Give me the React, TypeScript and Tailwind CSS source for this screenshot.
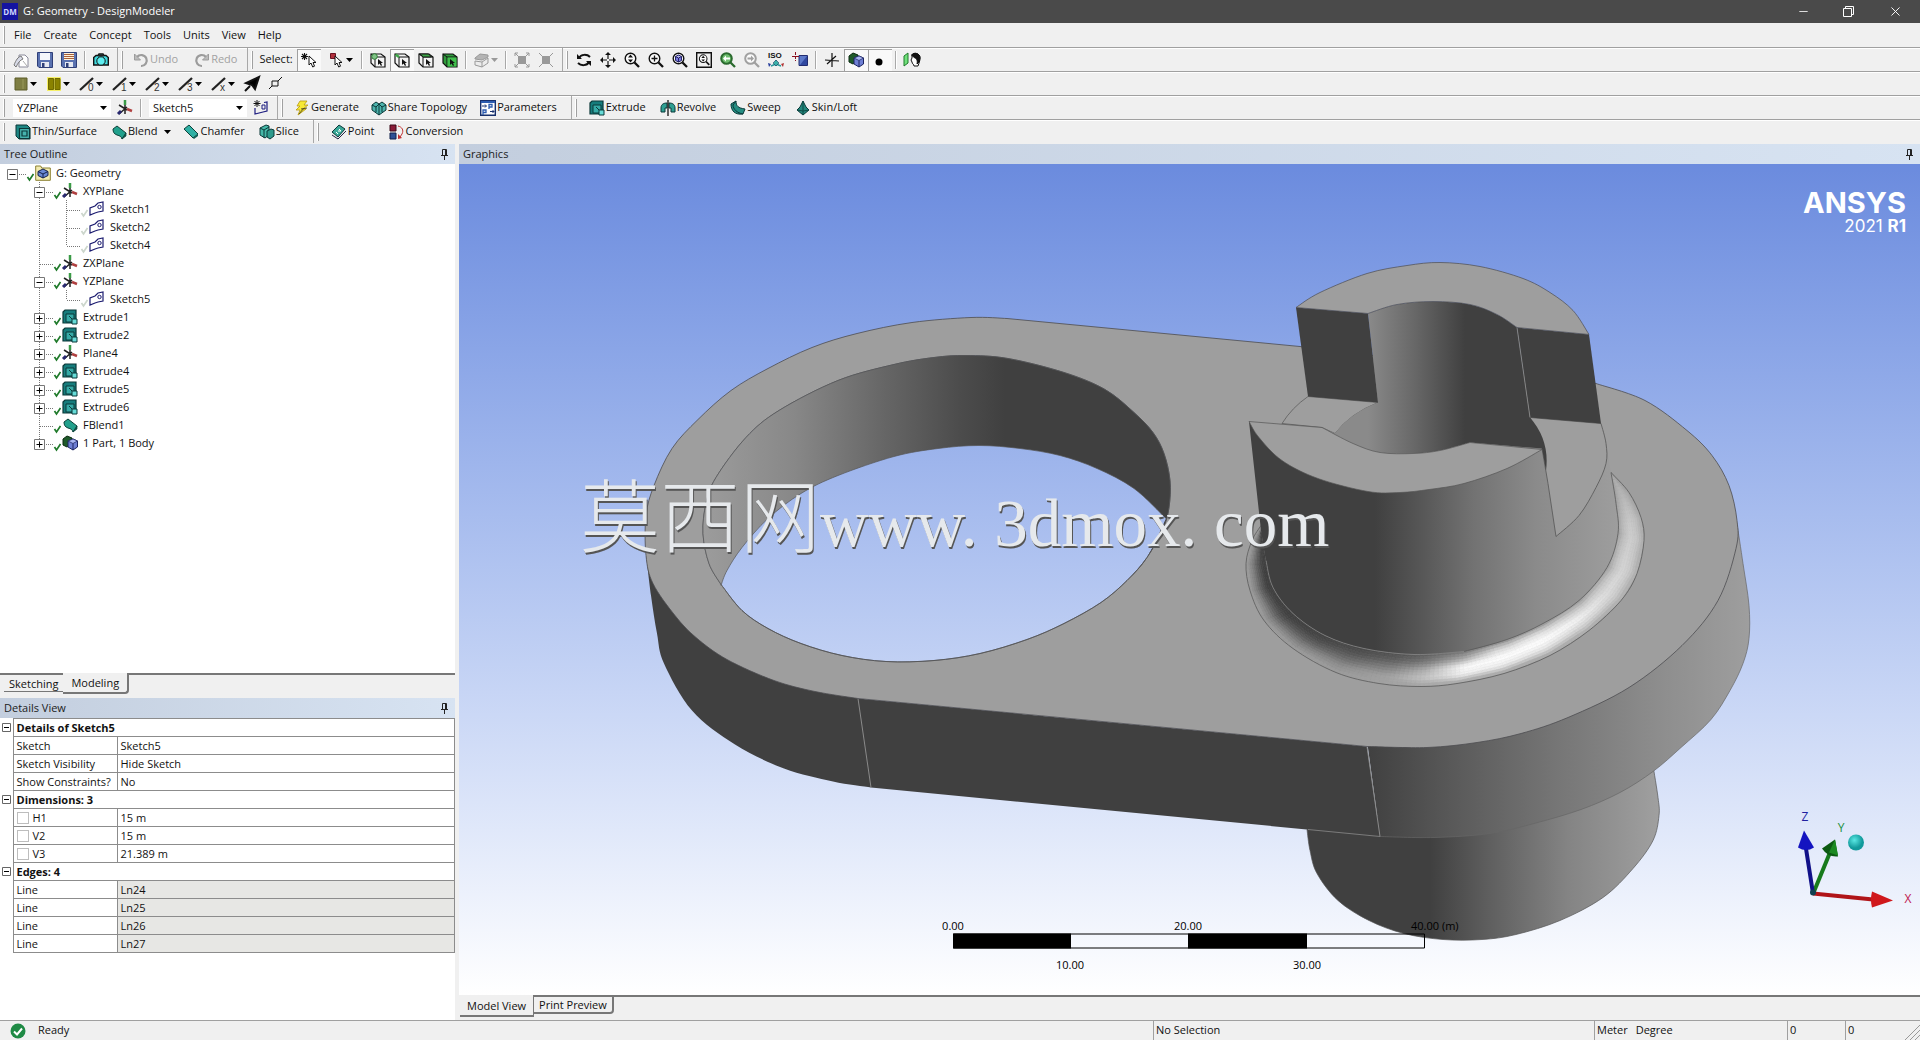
import type { ReactNode } from "react";
import { Minus, X } from "lucide-react";

/* ---------- small icons ---------- */

function Svg({ children, w = 16 }: { children: ReactNode; w?: number }) {
  return (
    <svg width={w} height="16" viewBox={`0 0 ${w} 16`} className="shrink-0 overflow-visible" fill="none" stroke="#111" aria-hidden="true">
      {children}
    </svg>
  );
}

const Caret = ({ color = "#000" }: { color?: string }) => (
  <svg width="7" height="4" viewBox="0 0 7 4" className="shrink-0" aria-hidden="true">
    <path d="M0 0h7L3.500 4z" fill={color} />
  </svg>
);

const NewIcon = () => (
  <Svg>
    <path d="M6 3h6l3 3v9H6z" fill="#fff" stroke="#8a8a9a" />
    <path d="M1 13c2-5 4-8 7-9l2 3c-3 1-5 4-7 8z" fill="#d8dbe8" stroke="#777" />
    <path d="M10 9l4 5" stroke="#aaa" />
  </Svg>
);

const SaveIcon = ({ lines = false }: { lines?: boolean }) => (
  <Svg>
    <path d="M.5 .5h15v15H2l-1.500-1.500z" fill="#5a72b0" stroke="#2f3f78" />
    <path d="M3 1h10v7H3z" fill={lines ? "#fff3dc" : "#f4f6fb"} stroke="none" />
    {lines && <path d="M3 2.500h10M3 4.500h10M3 6.500h10" stroke="#a8603a" />}
    <path d="M4 10h8v5H4z" fill="#e6e9f2" stroke="none" />
    <path d="M5 11h2.500v4H5z" fill="#2f3f78" stroke="none" />
  </Svg>
);

const CameraIcon = () => (
  <Svg>
    <path d="M.7 5.500L3 3.500h2L6 2h4l1 1.500h2l2.300 2V13H.7z" fill="#40d8dc" strokeWidth="1.400" />
    <path d="M5 2.500h6v2H5z" fill="#222" stroke="none" />
    <circle cx="8" cy="9" r="4.200" fill="#5eeef0" />
  </Svg>
);

const UndoIcon = ({ flip = false }: { flip?: boolean }) => (
  <Svg>
    <g stroke="#9c9c9c" strokeWidth="2.200" transform={flip ? "matrix(-1 0 0 1 16 0)" : undefined}>
      <path d="M4 5a5.500 5.500 0 1 1 4 9" />
      <path d="M1.500 2v6h6z" fill="#bbb" strokeWidth="1" />
    </g>
  </Svg>
);

const Pointer = ({ x = 0, y = 0, fill = "#fff" }: { x?: number; y?: number; fill?: string }) => (
  <path d="M0 0v9l2-2 1.700 4 1.800-.8L4 6.500h3z" transform={`translate(${x} ${y})`} fill={fill} />
);

const StarPointer = () => (
  <Svg>
    <path d="M3.500 1v7M0 4.500h7M1 2l5 5M6 2L1 7" strokeWidth="1.100" />
    <Pointer x={8} y={4} />
  </Svg>
);

const RedPointer = () => (
  <Svg>
    <path d="M1.500 1.500h5v5h-5z" fill="#b0303c" stroke="#6a1020" />
    <Pointer x={6} y={4} />
  </Svg>
);

const CubeSelect = ({ mode }: { mode: "point" | "edge" | "face" | "body" }) => (
  <Svg>
    <path d="M1 2h10l4 3v10H5l-4-4z" fill={mode === "body" ? "#2f9a3c" : "#f4f4f4"} strokeWidth="1.200" />
    <path d="M1 2l4 3h10M5 5v10" />
    {mode === "body" && <path d="M5.500 5.500h9v9h-9z" fill="#40bf4c" stroke="none" />}
    {mode === "face" && <path d="M1.500 2h9l3 3h-8z" fill="#3ea648" />}
    {mode === "edge" && <path d="M1.500 2.500L5 5" stroke="#3ea648" strokeWidth="2.500" />}
    {mode === "point" && <circle cx="4.500" cy="4.500" r="2.800" fill="#7fc285" stroke="#2e7a35" />}
    <path d="M8 7v6l1.500-1.500L11 14l1-.7-1-2.300h2z" fill="#111" stroke="none" />
  </Svg>
);

const GrayCube = () => (
  <Svg>
    <path d="M1 6l5-4 8 1v2L8 8l-7-1z" fill="#b4b4b4" stroke="#999" />
    <path d="M1 9l7 1 6-4v5l-6 4-7-2z" fill="#ececec" stroke="#999" />
    <path d="M8 10v5" stroke="#999" />
  </Svg>
);

const ExpandGray = ({ inward = false }: { inward?: boolean }) => (
  <Svg>
    <path d="M4 4h8v8H4z" fill="#999" stroke="none" />
    {inward ? (
      <path d="M1 1l4 4M15 1l-4 4M1 15l4-4M15 15l-4-4" stroke="#999" />
    ) : (
      <path d="M1 4V1h3M12 1h3v3M15 12v3h-3M4 15H1v-3M1 1l3 3M15 1l-3 3M1 15l3-3M15 15l-3-3" stroke="#999" />
    )}
  </Svg>
);

const RotateIcon = () => (
  <Svg>
    <path d="M3 6c2-4 8-4 11-1M13 10c-2 4-8 4-11 1" strokeWidth="2" />
    <path d="M1 2v5h5zM15 14V9h-5z" fill="#111" stroke="none" />
  </Svg>
);

const MoveIcon = () => (
  <Svg>
    <path d="M8 2v12M2 8h12" strokeWidth="1.200" strokeDasharray="5 2" />
    <path d="M8 0l3 3H5zM8 16l3-3H5zM0 8l3-3v6zM16 8l-3-3v6z" fill="#111" stroke="none" />
  </Svg>
);

const Lens = ({ kind, tone = "#111" }: { kind: "updown" | "plus" | "cube" | "box" | "back" | "none"; tone?: string }) => (
  <Svg>
    {kind === "box" && <path d="M.7.7h14.600v14.600H.7z" strokeWidth="1.400" />}
    <g transform={kind === "box" ? "translate(2.500 2) scale(.72)" : undefined} stroke={tone}>
      <circle cx="6.500" cy="6.500" r="5.300" fill={kind === "back" ? "#6fbf6f" : "#fbfbfb"} strokeWidth={kind === "back" || kind === "none" ? 2 : 1.4} />
      <path d="M10.500 10.500l4.500 4.500" strokeWidth="2.300" />
      {kind === "plus" && <path d="M6.500 3.500v6M3.500 6.500h6" strokeWidth="1.300" />}
      {(kind === "updown" || kind === "box") && <path d="M6.500 2.500l2.500 3H4zM6.500 10.500l2.500-3H4z" fill={tone} stroke="none" />}
      {kind === "cube" && <path d="M6.500 3l3 1.500v4l-3 1.500-3-1.500v-4zM3.500 4.500l3 1.500 3-1.500M6.500 6v4" fill="#7a7ae0" stroke="#22226a" />}
      {kind === "back" && <path d="M3 6.500l3-3v2h4v2H6v2z" fill="#fff" stroke="none" />}
      {kind === "none" && <path d="M10 6.500l-3-3v2H3.500v2H7v2z" fill={tone} stroke="none" />}
    </g>
  </Svg>
);

const IsoIcon = () => (
  <svg width="16" height="18" viewBox="0 0 16 18" className="shrink-0 overflow-visible" aria-hidden="true">
    <text x="0" y="7" fontSize="8" className="font-['Liberation_Sans',sans-serif] font-bold" fill="#111">ISO</text>
    <path d="M8 9v6M8 13l-5 2M8 13l5 2" stroke="#2a9a9a" strokeWidth="1.500" />
    <path d="M8 9l3 3-3 3-3-3z" fill="#3ab0a8" stroke="#125" strokeWidth=".5" />
    <path d="M0 12l3 1-2 3z" fill="#223a9a" />
    <path d="M16 12l-3 1 2 3z" fill="#b03030" />
  </svg>
);

const LookAtIcon = () => (
  <Svg>
    <path d="M7 3.500h8.500v10H7z" fill="#5c78c8" stroke="#222c70" />
    <path d="M8 13l7-9v9z" fill="#3048a0" stroke="none" />
    <path d="M3.500 0v9M0 4.500h8" stroke="#8a1020" strokeDasharray="3 1" />
  </Svg>
);

const AxisMono = () => (
  <Svg>
    <path d="M8 1v14M1 8l14 1M3 12l9-8" strokeWidth="1.200" />
  </Svg>
);

const SolidIcon = () => (
  <Svg>
    <path d="M1 4l4-3 5 2v6l-5 3-4-2z" fill="#1f5a2a" stroke="#0a2a10" />
    <path d="M6 6l5-2 4.500 2v6L11 15l-5-3z" fill="#6e7fd4" stroke="#1c2460" />
    <path d="M6 6l5 2.500L15.500 6 11 4z" fill="#a9b6f2" stroke="#1c2460" strokeWidth=".7" />
    <path d="M11 8.500V15" stroke="#1c2460" />
  </Svg>
);

const DotIcon = () => (
  <Svg>
    <circle cx="7" cy="10" r="3.500" fill="#000" stroke="none" />
  </Svg>
);

const FaceIcon = () => (
  <Svg w={18}>
    <path d="M1 4l4-3v10l-4 3z" fill="#6fe07a" stroke="#1f7a2a" />
    <path d="M9 3c2-3 8-2 8 3 0 3-1 5-2 8h-4c0-2-2-2-2-4l-1-2 1-2z" fill="#fff" />
    <path d="M8.500 3c2-3 8.500-2 8.500 3l-1 4-2 2c1-4-1-6-3-6.500z" fill="#111" />
  </Svg>
);

const EdgeLine = ({ label }: { label: string }) => (
  <Svg>
    <path d="M1 14L14 2" strokeWidth="2.300" stroke="#222" />
    <text x="9" y="15" fontSize="10" fill="#333" stroke="none" className="font-['Liberation_Sans',sans-serif]">{label}</text>
  </Svg>
);

const Triad = () => (
  <Svg>
    <path d="M8 2v12M2 5l8 5M2 14l8-7" stroke="#222" strokeWidth="1.500" />
    <path d="M8 0v5" stroke="#3a9a46" strokeWidth="2.500" />
    <path d="M10 9l5 2" stroke="#b04040" strokeWidth="2.500" />
    <path d="M1 14l3-3" stroke="#28286e" strokeWidth="3" />
  </Svg>
);

const SketchIcon = () => (
  <Svg>
    <path d="M1 14V7l5-2 3-3 5-1v9l-5 1-3 1z" stroke="#1c1c70" strokeWidth="1.200" />
    <circle cx="10.500" cy="6" r="1.700" stroke="#1c1c70" />
  </Svg>
);

const NewSketchIcon = () => (
  <Svg>
    <path d="M2 8v6l8-2 4-1V2l-3 .5" stroke="#1c1c80" strokeWidth="1.200" />
    <path d="M9 5h3v4H9z" stroke="#1c1c80" />
    <path d="M4 0v7M.5 3.500h7M1.500 1l5 5M6.500 1l-5 5" />
  </Svg>
);

const ExtrudeIcon = () => (
  <Svg>
    <path d="M1 3l2-2h11v9l-2 4H1z" fill="#167c7c" stroke="#0b3838" strokeWidth="1.200" />
    <path d="M4 5h8v8H4z" fill="#35aaa6" stroke="#0b3838" />
    <path d="M7 7l3 3" stroke="#0b3838" />
    <path d="M10 10h5v5h-5z" fill="#67dcd8" stroke="#0b3838" />
  </Svg>
);

const ThinIcon = () => (
  <Svg>
    <path d="M1 1h11l3 3v11H4l-3-3z" fill="#1d8784" stroke="#0b3838" />
    <path d="M4.500 4.500h10v10h-10zM7 7h5v5H7z" fill="#46b3ae" stroke="#0b3838" strokeWidth="1.200" />
  </Svg>
);

const BlendIcon = () => (
  <Svg>
    <path d="M2 5l4-3 9 7-4 6c-1-3-2-3-5-4-3-1-4-3-4-6z" fill="#22a08c" stroke="#0b4038" />
    <path d="M11 15l4-6v3z" fill="#0f5f56" stroke="#0b4038" strokeWidth=".7" />
  </Svg>
);

const ChamferIcon = () => (
  <Svg>
    <path d="M1 5l5-4 9 9-5 4z" fill="#2fb0a4" stroke="#0b4038" />
    <path d="M10 14l5-4v2l-4 3z" fill="#0f5f56" stroke="none" />
  </Svg>
);

const SliceIcon = () => (
  <Svg>
    <path d="M1 4l6-3 3 1v9l-4 3-5-3z" fill="#45b8a8" stroke="#0b3838" />
    <path d="M8 7l4-2 3 1v6l-4 3-3-2z" fill="#2e9a8c" stroke="#0b3838" />
    <path d="M1 4l4 2 5-3M5 6v8" stroke="#0b3838" />
  </Svg>
);

const PointIcon = () => (
  <Svg>
    <path d="M1 8l7-7 6 4-7 8z" fill="#3aa898" stroke="#0b3838" />
    <path d="M1 11l6 4 8-8" stroke="#224" />
    <path d="M5 8l2 2M8 5l2 2M7 7h3" stroke="#fff" />
  </Svg>
);

const ConversionIcon = () => (
  <Svg>
    <path d="M1 1h6v6H1z" fill="#8a1c38" stroke="#3a0a18" />
    <path d="M1 9h6v6H1z" fill="#2c4f94" stroke="#10204a" />
    <path d="M9 2c4 1 6 4 4 8l-2 3" stroke="#c03030" />
    <path d="M9 10v5l4-1z" fill="#c03030" stroke="none" />
  </Svg>
);

const BoltIcon = () => (
  <Svg>
    <path d="M6 1h7l-3 4h4l-5 4h3L4 15l2-5H2l4-4H3z" fill="#f7e935" stroke="#b89a10" strokeWidth=".8" />
    <path d="M7 9l6-1M5 14l5-6" stroke="#57501c" />
  </Svg>
);

const ShareIcon = () => (
  <Svg>
    <path d="M1 5l4-3 3 2 3-2 4 3v5l-7 5-7-5z" fill="#4cb3ac" stroke="#0b3838" />
    <path d="M1 5l4 2 3-3 3 3 4-2M8 4v11M5 7v5M11 7v5" stroke="#0b3838" />
  </Svg>
);

const ParamIcon = () => (
  <Svg>
    <path d="M.7.700h14.600v14.600H.7z" fill="#fff" stroke="#17306c" strokeWidth="1.400" />
    <path d="M1 2h14" stroke="#2c5cb0" strokeWidth="2" />
    <path d="M2 6h4M5 4.500L6.500 6 5 7.500M10 11.500h4M12.500 10l1.500 1.500-1.500 1.500" stroke="#17306c" />
    <path d="M9 9V4.500h3v2.500H9M3 15v-5h3v2.500H3" stroke="#2c5cb0" strokeWidth="1.300" />
  </Svg>
);

const RevolveIcon = () => (
  <Svg>
    <path d="M1 8c0-4 3-5 6-5v5H5v4H1zM15 8c0-4-3-5-6-5v5h2v4h4z" fill="#2f9f92" stroke="#0b3838" />
    <path d="M8 0v16" stroke="#111" strokeWidth="1.300" />
  </Svg>
);

const SweepIcon = () => (
  <Svg>
    <path d="M1 4l5-3c0 5 2 7 9 8l-2 5C5 15 1 11 1 4z" fill="#258e82" stroke="#0b3838" />
    <path d="M6 1L3 5c0 4 4 8 10 9" stroke="#0b3838" />
  </Svg>
);

const SkinIcon = () => (
  <Svg>
    <path d="M8 1l3 6 3 3-6 5-6-5 3-3z" fill="#23877c" stroke="#0b3838" />
    <path d="M8 1v14M2 10l6 1 6-1" stroke="#0b4a44" />
  </Svg>
);

const RootIcon = () => (
  <Svg>
    <path d="M.7 3V1h5l1 2h8.600v12.300H.7z" fill="#f3ebb0" stroke="#8a8030" />
    <path d="M8 4l5 2.500v4L8 13l-5-2.500v-4z" fill="#6a88d4" stroke="#14204a" />
    <path d="M3 6.500L8 9l5-2.500M8 9v4" stroke="#14204a" />
  </Svg>
);

const PinIcon = () => (
  <svg width="9" height="11" viewBox="0 0 9 11" fill="none" stroke="#222" aria-hidden="true">
    <path d="M2.500 .5h4v6h-4zM1 6.500h7M4.500 7v4M5.500 1v5" />
  </svg>
);

/* ---------- toolbar pieces ---------- */

function Group({ children, open = false, spaced = false }: { children: ReactNode; open?: boolean; spaced?: boolean }) {
  return (
    <div className={`flex h-[23px] items-center ${spaced ? "gap-[2px]" : ""} ${open ? "" : "border-r border-[#a8a8a8] pr-1"}`}>
      <span className="mr-1 ml-[3px] h-[18px] w-[2px] border-r border-[#a0a0a0] bg-white" />
      {children}
    </div>
  );
}

function Tool({ label, children, pressed = false }: { label: string; children: ReactNode; pressed?: boolean }) {
  return (
    <button
      type="button"
      aria-label={label}
      className={`flex h-[22px] w-6 items-center justify-center ${pressed ? "border-t border-l border-[#a0a0a0] bg-[#f9f9f9]" : ""}`}
    >
      {children}
    </button>
  );
}

function DropTool({ label, children }: { label: string; children: ReactNode }) {
  return (
    <button type="button" aria-label={label} className="flex h-[22px] w-[33px] items-center gap-px pl-1">
      {children}
      <Caret />
    </button>
  );
}

function TextTool({ icon, label, caret = false, disabled = false }: { icon: ReactNode; label: string; caret?: boolean; disabled?: boolean }) {
  return (
    <button type="button" className={`flex h-[22px] items-center gap-px px-[6px] ${disabled ? "text-[#a2a2a2]" : ""}`}>
      {icon}
      <span>{label}</span>
      {caret && <span className="pl-[6px]"><Caret /></span>}
    </button>
  );
}

const Sep = () => <span className="mx-[3px] h-[18px] w-[2px] border-l border-[#a8a8a8] bg-white" />;

function Combo({ label, value }: { label: string; value: string }) {
  return (
    <span className="relative ml-1 flex items-center">
      <select aria-label={label} defaultValue={value} className="h-[18px] w-[98px] appearance-none bg-white px-1 text-[11px] leading-[18px] outline-none">
        <option>{value}</option>
      </select>
      <span className="pointer-events-none absolute right-1"><Caret /></span>
    </span>
  );
}

const row = "flex h-6 items-start border-b border-[#a0a0a0] bg-[#f0f0f0] shadow-[inset_0_1px_0_#fff]";

function Toolbars() {
  return (
    <div>
      <nav className="flex h-[25px] items-center border-b border-[#a0a0a0] bg-[#f0f0f0]">
        <span className="mr-[3px] ml-[3px] h-[18px] w-[2px] border-r border-[#a0a0a0] bg-white" />
        {["File", "Create", "Concept", "Tools", "Units", "View", "Help"].map((m) => (
          <button key={m} type="button" className="px-[6px]">{m}</button>
        ))}
      </nav>

      <div className={row}>
        <Group>
          <Tool label="New"><NewIcon /></Tool>
          <Tool label="Save"><SaveIcon /></Tool>
          <Tool label="Save As"><SaveIcon lines /></Tool>
          <Sep />
          <Tool label="Image Capture"><CameraIcon /></Tool>
        </Group>
        <Group>
          <TextTool icon={<UndoIcon />} label="Undo" disabled />
          <span className="w-1" />
          <TextTool icon={<UndoIcon flip />} label="Redo" disabled />
        </Group>
        <Group>
          <span className="pr-1 pl-[2px]">Select:</span>
          <Tool label="New Selection" pressed><StarPointer /></Tool>
          <span className="w-1" />
          <DropTool label="Select Mode"><RedPointer /></DropTool>
          <Sep />
          <Tool label="Points"><CubeSelect mode="point" /></Tool>
          <Tool label="Edges" pressed><CubeSelect mode="edge" /></Tool>
          <Tool label="Faces"><CubeSelect mode="face" /></Tool>
          <Tool label="Bodies"><CubeSelect mode="body" /></Tool>
          <Sep />
          <button type="button" aria-label="Extend Selection" className="flex h-[22px] w-8 items-center gap-px pl-1">
            <GrayCube />
            <Caret color="#999" />
          </button>
          <Sep />
          <Tool label="Expand Faces"><ExpandGray /></Tool>
          <Tool label="Shrink Faces"><ExpandGray inward /></Tool>
        </Group>
        <Group open>
          <Tool label="Rotate"><RotateIcon /></Tool>
          <Tool label="Pan"><MoveIcon /></Tool>
          <Tool label="Zoom"><Lens kind="updown" /></Tool>
          <Tool label="Box Zoom"><Lens kind="plus" /></Tool>
          <Tool label="Zoom to Fit"><Lens kind="cube" /></Tool>
          <Tool label="Magnifier"><Lens kind="box" /></Tool>
          <Tool label="Previous View"><Lens kind="back" tone="#2a6a2e" /></Tool>
          <Tool label="Next View"><Lens kind="none" tone="#a0a0a0" /></Tool>
          <Tool label="Isometric View"><IsoIcon /></Tool>
          <Tool label="Look At"><LookAtIcon /></Tool>
          <Sep />
          <Tool label="Display Plane"><AxisMono /></Tool>
          <Tool label="Display Model" pressed><SolidIcon /></Tool>
          <Tool label="Display Points" pressed><DotIcon /></Tool>
          <Sep />
          <Tool label="Look At Face"><FaceIcon /></Tool>
        </Group>
      </div>

      <div className={row}>
        <Group open>
          <DropTool label="Face Color">
            <Svg><path d="M2 2h12v12H2z" fill="#7d7d42" stroke="#5c5c28" /><path d="M10 3v10" stroke="#9a9a5a" /></Svg>
          </DropTool>
          <DropTool label="Edge Color">
            <Svg><path d="M1 1h14v14H1z" fill="#f6f06a" stroke="none" /><path d="M2.500 2.500h5v11h-5zM9 2.500h5v11H9z" fill="#8a8200" stroke="#706a00" /></Svg>
          </DropTool>
          {["0", "1", "2", "3", "x"].map((n) => (
            <DropTool key={n} label={`Edge joint ${n}`}><EdgeLine label={n} /></DropTool>
          ))}
          <Tool label="Direction">
            <Svg><path d="M1 15l5-5M15 1l-4 12-3-4-6-2z" fill="#000" strokeWidth="2" /></Svg>
          </Tool>
          <Tool label="Vertices">
            <Svg><path d="M4 5h6v5H4zM10 5l4-4M4 10l-3 3" /></Svg>
          </Tool>
        </Group>
      </div>

      <div className={row}>
        <Group>
          <Combo label="Active plane" value="YZPlane" />
          <span className="w-[2px]" />
          <Tool label="New Plane"><Triad /></Tool>
          <Sep />
          <Combo label="Active sketch" value="Sketch5" />
          <span className="w-[2px]" />
          <Tool label="New Sketch"><NewSketchIcon /></Tool>
        </Group>
        <Group>
          <span className="w-px" />
          <TextTool icon={<BoltIcon />} label="Generate" />
          <TextTool icon={<ShareIcon />} label="Share Topology" />
          <span className="w-px" />
          <TextTool icon={<ParamIcon />} label="Parameters" />
          <span className="w-1" />
        </Group>
        <Group open spaced>
          <TextTool icon={<ExtrudeIcon />} label="Extrude" />
          <TextTool icon={<RevolveIcon />} label="Revolve" />
          <TextTool icon={<SweepIcon />} label="Sweep" />
          <TextTool icon={<SkinIcon />} label="Skin/Loft" />
        </Group>
      </div>

      <div className="flex h-6 items-start bg-[#f0f0f0] shadow-[inset_0_1px_0_#fff]">
        <Group>
          <TextTool icon={<ThinIcon />} label="Thin/Surface" />
          <span className="w-[2px]" />
          <TextTool icon={<BlendIcon />} label="Blend" caret />
          <TextTool icon={<ChamferIcon />} label="Chamfer" />
          <span className="w-[2px]" />
          <TextTool icon={<SliceIcon />} label="Slice" />
          <span className="w-1" />
        </Group>
        <Group open spaced>
          <TextTool icon={<PointIcon />} label="Point" />
          <TextTool icon={<ConversionIcon />} label="Conversion" />
        </Group>
      </div>
    </div>
  );
}

/* ---------- left side ---------- */

function PanelHeader({ title }: { title: string }) {
  return (
    <div className="flex h-5 shrink-0 items-center justify-between bg-linear-to-r from-[#c3cede] to-[#d7e3f2] pr-[6px] pl-1 text-[#1c1c1c]">
      <h2>{title}</h2>
      <button type="button" aria-label={`Pin ${title}`}><PinIcon /></button>
    </div>
  );
}

type Node = { depth: number; label: string; icon: () => ReactNode; box?: "+" | "-"; last?: boolean };

const tree: Node[] = [
  { depth: 0, label: "G: Geometry", icon: RootIcon, box: "-" },
  { depth: 1, label: "XYPlane", icon: Triad, box: "-" },
  { depth: 2, label: "Sketch1", icon: SketchIcon },
  { depth: 2, label: "Sketch2", icon: SketchIcon },
  { depth: 2, label: "Sketch4", icon: SketchIcon, last: true },
  { depth: 1, label: "ZXPlane", icon: Triad },
  { depth: 1, label: "YZPlane", icon: Triad, box: "-" },
  { depth: 2, label: "Sketch5", icon: SketchIcon, last: true },
  { depth: 1, label: "Extrude1", icon: ExtrudeIcon, box: "+" },
  { depth: 1, label: "Extrude2", icon: ExtrudeIcon, box: "+" },
  { depth: 1, label: "Plane4", icon: Triad, box: "+" },
  { depth: 1, label: "Extrude4", icon: ExtrudeIcon, box: "+" },
  { depth: 1, label: "Extrude5", icon: ExtrudeIcon, box: "+" },
  { depth: 1, label: "Extrude6", icon: ExtrudeIcon, box: "+" },
  { depth: 1, label: "FBlend1", icon: BlendIcon },
  { depth: 1, label: "1 Part, 1 Body", icon: SolidIcon, box: "+", last: true },
];

function TreeRow({ node }: { node: Node }) {
  const dots = { stroke: "#777", strokeDasharray: "1 1" };
  return (
    <li className="flex h-[18px] items-center pl-[7px]">
      {node.depth > 0 && <span className="w-[27px]" />}
      {node.depth > 1 && (
        <svg width="27" height="18" aria-hidden="true"><path d="M5.500 0v18" {...dots} /></svg>
      )}
      <svg width="27" height="18" className="shrink-0" fill="none" aria-hidden="true">
        {node.depth > 0 && <path d={node.last ? "M5.500 0v10" : "M5.500 0v18"} {...dots} />}
        <path d="M6 10.500h13" {...dots} />
        {node.box && <path d="M.5 5.500h10v10H.5z" fill="#fff" stroke="#777" />}
        {node.box && <path d={node.box === "+" ? "M2.500 10.500h6M5.500 7.500v6" : "M2.500 10.500h6"} stroke="#000" />}
        <path d="M20.500 13l2 3 4-6" stroke={node.depth === 2 ? "#ccd6cc" : "#1f7a2a"} strokeWidth="1.700" />
      </svg>
      <span className="ml-px flex w-[21px] items-center"><node.icon /></span>
      <span className="leading-[16px]">{node.label}</span>
    </li>
  );
}

type Row = { name: string; value?: string; tick?: boolean; muted?: boolean };

const details: Row[] = [
  { name: "Details of Sketch5" },
  { name: "Sketch", value: "Sketch5" },
  { name: "Sketch Visibility", value: "Hide Sketch" },
  { name: "Show Constraints?", value: "No" },
  { name: "Dimensions: 3" },
  { name: "H1", value: "15 m", tick: true },
  { name: "V2", value: "15 m", tick: true },
  { name: "V3", value: "21.389 m", tick: true },
  { name: "Edges: 4" },
  { name: "Line", value: "Ln24", muted: true },
  { name: "Line", value: "Ln25", muted: true },
  { name: "Line", value: "Ln26", muted: true },
  { name: "Line", value: "Ln27", muted: true },
];

function DetailsTable() {
  return (
    <table className="w-full table-fixed border-collapse text-left">
      <colgroup>
        <col className="w-[13px]" />
        <col className="w-[104px]" />
        <col />
      </colgroup>
      <tbody>
        {details.map((d, i) => (
          <tr key={i} className="h-[18px]">
            <td className="p-0">
              {!d.value && (
                <button type="button" aria-label={`Collapse ${d.name}`} className="ml-[2px] block">
                  <svg width="9" height="9" fill="none" stroke="#666"><path d="M.5.5h8v8h-8z" /><path d="M2 4.500h5" stroke="#000" /></svg>
                </button>
              )}
            </td>
            {d.value ? (
              <>
                <th scope="row" className="border border-[#8c8c8c] px-[3px] py-0 leading-[16px] font-normal whitespace-nowrap">
                  {d.tick ? (
                    <label className="flex items-center gap-1">
                      <input type="checkbox" className="h-3 w-3 appearance-none border border-[#bdbdbd] bg-white" />
                      {d.name}
                    </label>
                  ) : (
                    d.name
                  )}
                </th>
                <td className={`border border-[#8c8c8c] px-[3px] py-0 leading-[16px] ${d.muted ? "bg-[#e7e7e4]" : ""}`}>{d.value}</td>
              </>
            ) : (
              <th scope="colgroup" colSpan={2} className="border border-[#8c8c8c] px-[3px] py-0 leading-[16px] font-bold">{d.name}</th>
            )}
          </tr>
        ))}
      </tbody>
    </table>
  );
}

function Sidebar() {
  return (
    <aside className="flex w-[455px] shrink-0 flex-col bg-white">
      <PanelHeader title="Tree Outline" />
      <ul className="grow bg-white">
        {tree.map((n) => <TreeRow key={n.label} node={n} />)}
      </ul>
      <div className="flex h-[25px] shrink-0 items-start bg-[#f0f0f0]">
        <button type="button" className="h-[19px] border-t-2 border-[#777] pl-1">
          <span className="block h-[16px] border-b border-[#777] px-[5px] leading-[15px]">Sketching</span>
        </button>
        <button type="button" className="h-[21px] rounded-br-sm border-r-2 border-b-2 border-[#777] px-2 pt-[2px]">Modeling</button>
        <span className="h-0 grow border-t-2 border-[#777]" />
      </div>
      <PanelHeader title="Details View" />
      <div className="h-[302px] shrink-0">
        <DetailsTable />
      </div>
    </aside>
  );
}

/* ---------- 3D view ---------- */

// open Catmull-Rom spline through a flat list of x,y pairs
function spline(flat: number[], start = "M") {
  const p: number[][] = [];
  for (let i = 0; i < flat.length; i += 2) p.push([flat[i], flat[i + 1]]);
  let d = `${start}${p[0][0]} ${p[0][1]}`;
  for (let i = 0; i < p.length - 1; i++) {
    const a = p[i - 1] ?? p[i];
    const b = p[i];
    const c = p[i + 1];
    const e = p[i + 2] ?? c;
    d += `C${b[0] + (c[0] - a[0]) / 6} ${b[1] + (c[1] - a[1]) / 6} ${c[0] - (e[0] - b[0]) / 6} ${c[1] - (e[1] - b[1]) / 6} ${c[0]} ${c[1]}`;
  }
  return d;
}

// n + 1 points spaced evenly along the polyline
function resample(flat: number[], n: number) {
  const len = [0];
  for (let i = 2; i < flat.length; i += 2) {
    len.push(len[len.length - 1] + Math.hypot(flat[i] - flat[i - 2], flat[i + 1] - flat[i - 1]));
  }
  const total = len[len.length - 1];
  return Array.from({ length: n + 1 }, (_, k) => {
    const at = (total * k) / n;
    let i = 1;
    while (i < len.length - 1 && len[i] < at) i++;
    const f = (at - len[i - 1]) / (len[i] - len[i - 1]);
    return [flat[2 * i - 2] + f * (flat[2 * i] - flat[2 * i - 2]), flat[2 * i - 1] + f * (flat[2 * i + 1] - flat[2 * i - 1])];
  });
}

const plateLeft = [1007, 318, 971, 317, 912, 322, 857, 333, 812, 347, 768, 368, 731, 390, 698, 419, 672, 448, 654, 485, 646, 515, 646, 555, 653, 583, 675, 615, 696, 637, 727, 659, 774, 680, 815, 691, 858, 698];
const plateRight = [1367, 746, 1427, 747, 1477, 742, 1521, 733, 1568, 717, 1629, 687, 1682, 645, 1718, 600, 1736, 548, 1737, 520, 1729, 485, 1712, 455, 1687, 430, 1645, 400, 1596, 383];
const sideLeft = [646, 553, 651, 595, 657, 633, 664, 663, 692, 710, 735, 744, 784, 768, 833, 781, 871, 787];
const sideRight = [1380, 836, 1434, 837, 1490, 833, 1534, 823, 1581, 809, 1620, 792, 1653, 771, 1681, 747, 1711, 719, 1730, 690, 1743, 663, 1749, 638, 1749, 605, 1743, 563, 1737, 523];
const hole = [721, 584, 709, 563, 703, 533, 706, 503, 716, 477, 746, 437, 779, 410, 838, 380, 894, 364, 934, 357, 966, 355, 1008, 358, 1064, 372, 1105, 389, 1134, 412, 1153, 432, 1164, 453, 1170, 480, 1169, 507, 1163, 528, 1147, 557, 1127, 580, 1101, 602, 1064, 623, 1027, 639, 980, 653, 934, 660, 886, 661, 842, 655, 801, 643, 768, 628, 742, 610, 721, 584];
const holeBack = [721, 585, 727, 570, 742, 547, 768, 518, 801, 493, 838, 475, 894, 456, 938, 448, 979, 445, 1020, 448, 1060, 455, 1097, 468, 1134, 488, 1166, 518];
const holeFront = [1166, 518, 1147, 557, 1127, 580, 1101, 602, 1064, 623, 1027, 639, 980, 653, 934, 660, 886, 661, 842, 655, 801, 643, 768, 628, 742, 610, 721, 585];
const lowerPin = [1307, 829, 1310, 850, 1317, 873, 1338, 900, 1369, 920, 1404, 933, 1443, 939, 1482, 939, 1516, 934, 1560, 920, 1603, 897, 1633, 868, 1653, 840, 1659, 815, 1658, 797, 1653, 765];
const filletOuter = [1611, 472, 1629, 492, 1641, 517, 1644, 540, 1637, 573, 1621, 600, 1589, 630, 1550, 655, 1504, 673, 1457, 683, 1421, 686, 1379, 683, 1336, 672, 1293, 648, 1264, 620, 1250, 590, 1246, 563, 1252, 540, 1261, 525];
const filletInner = [1261, 530, 1266, 560, 1273, 587, 1293, 613, 1325, 635, 1364, 648, 1414, 654, 1464, 651, 1507, 639, 1543, 623, 1579, 600, 1607, 567, 1618, 533, 1616, 503, 1611, 472];
const crownOuter = [1296, 307, 1320, 292, 1367, 273, 1407, 265, 1440, 262, 1480, 266, 1523, 278, 1550, 292, 1573, 310, 1589, 334];
const crownInner = [1517, 327, 1497, 314, 1470, 304, 1433, 301, 1397, 304, 1368, 313];
const crownInnerBack = [1368, 313, 1397, 304, 1433, 301, 1470, 304, 1497, 314, 1517, 327];
const boreFront = [1470, 442, 1440, 450, 1413, 453, 1380, 452, 1353, 443, 1322, 427];
const boreFrontBack = [1322, 427, 1353, 443, 1380, 452, 1413, 453, 1440, 450, 1470, 442];
const frontRim = [1542, 449, 1507, 468, 1464, 483, 1429, 489, 1400, 492, 1368, 491, 1318, 478, 1282, 460, 1259, 437, 1249, 421];
const slotEdge = [1601, 423, 1606, 443, 1606, 463, 1596, 487, 1579, 515, 1556, 536];

// grey levels over the fillet: [position along it, levels from the boss wall out to the plate]
const filletShade: [number, number[]][] = [
  [0, [156, 164, 170, 164, 158]],
  [0.1, [160, 190, 204, 196, 172]],
  [0.22, [156, 200, 220, 206, 174]],
  [0.3, [150, 208, 246, 216, 168]],
  [0.36, [146, 226, 255, 228, 162]],
  [0.44, [136, 216, 255, 236, 160]],
  [0.5, [118, 170, 250, 240, 162]],
  [0.56, [96, 124, 178, 200, 164]],
  [0.62, [80, 98, 132, 164, 162]],
  [0.7, [70, 84, 110, 142, 158]],
  [0.8, [64, 70, 94, 130, 158]],
  [0.92, [64, 66, 94, 132, 158]],
  [1, [64, 76, 108, 140, 158]],
];

function shadeAt(s: number, t: number) {
  let i = 1;
  while (i < filletShade.length - 1 && filletShade[i][0] < s) i++;
  const [s0, a] = filletShade[i - 1];
  const [s1, b] = filletShade[i];
  const f = (s - s0) / (s1 - s0);
  const k = Math.min(3, Math.floor(t * 4));
  const g = t * 4 - k;
  const v = (a[k] * (1 - g) + a[k + 1] * g) * (1 - f) + (b[k] * (1 - g) + b[k + 1] * g) * f;
  return `rgb(${Math.round(v)} ${Math.round(v)} ${Math.round(v)})`;
}

function Fillet() {
  const along = 140;
  const across = 12;
  const outer = resample(filletOuter, along);
  const inner = resample(filletInner, along).reverse();
  const at = (i: number, t: number) => `${inner[i][0] + t * (outer[i][0] - inner[i][0])} ${inner[i][1] + t * (outer[i][1] - inner[i][1])}`;
  const cells = [];
  for (let i = 0; i < along; i++) {
    for (let j = 0; j < across; j++) {
      const c = shadeAt((i + 0.5) / along, (j + 0.5) / across);
      const t0 = j / across;
      const t1 = (j + 1) / across;
      cells.push(<path key={`${i}-${j}`} d={`M${at(i, t0)}L${at(i, t1)}L${at(i + 1, t1)}L${at(i + 1, t0)}Z`} fill={c} stroke={c} strokeWidth=".6" />);
    }
  }
  return <g clipPath="url(#filletClip)">{cells}</g>;
}

function Gradient({ id, x1, x2, stops }: { id: string; x1: number; x2: number; stops: [number, string][] }) {
  return (
    <linearGradient id={id} gradientUnits="userSpaceOnUse" x1={x1} x2={x2} y1="0" y2="0">
      {stops.map(([o, c]) => <stop key={o} offset={o} stopColor={c} />)}
    </linearGradient>
  );
}

function Model() {
  const face = "#9e9e9e";
  const dark = "#404040";
  const fillet = `${spline(filletOuter)}${spline(filletInner, "L")}Z`;
  return (
    <g strokeLinejoin="round">
      <defs>
        <Gradient id="bore" x1={1368} x2={1465} stops={[[0, "#8a8a8a"], [0.5, "#666"], [1, dark]]} />
        <Gradient id="holeWall" x1={703} x2={1005} stops={[[0, "#9c9c9c"], [0.3, "#888"], [0.6, "#666"], [0.85, "#4c4c4c"], [1, dark]]} />
        <Gradient id="boss" x1={1375} x2={1620} stops={[[0, dark], [0.2, "#585858"], [0.4, "#727272"], [0.65, "#8a8a8a"], [1, "#9e9e9e"]]} />
        <Gradient id="side" x1={1367} x2={1749} stops={[[0, dark], [0.25, "#5c5c5c"], [0.5, "#767676"], [0.75, "#8c8c8c"], [1, "#9e9e9e"]]} />
        <Gradient id="pin" x1={1430} x2={1660} stops={[[0, dark], [0.25, "#5e5e5e"], [0.6, "#848484"], [1, "#a0a0a0"]]} />
        <clipPath id="filletClip"><path d={fillet} /></clipPath>
      </defs>

      <path d={`${spline(lowerPin)}Z`} fill="url(#pin)" stroke="#555" strokeWidth=".7" />
      <path d={`${spline(sideLeft)}L1380 836L1367 746L858 698L700 600Z`} fill={dark} />
      <path d={`${spline(sideRight)}L1600 560L1367 740Z`} fill="url(#side)" />
      <path d={spline(sideRight)} fill="none" stroke="#666" strokeWidth=".7" />
      <path d="M858 698L871 787M1367 746L1380 836" stroke="#8a8a8a" strokeWidth="1" />
      <path d="M1308 829L1380 836" stroke="#8a8a8a" strokeWidth=".8" />

      <path
        d={`${spline(plateLeft)}${spline(plateRight, "L")}L1300 346Z${spline(hole)}Z`}
        fillRule="evenodd"
        fill={face}
        stroke="#4c4c50"
        strokeWidth=".8"
      />
      <path d={`${spline(hole)}Z${spline(holeBack)}${spline(holeFront, "L")}Z`} fillRule="evenodd" fill="url(#holeWall)" />
      <path d={`${spline(hole)}${spline(holeBack)}`} fill="none" stroke="#555" strokeWidth=".7" />

      <path d={fillet} fill={face} />
      <Fillet />
      <path d={spline(filletOuter)} fill="none" stroke="#5a5a5a" strokeWidth=".8" />

      {/* boss wall */}
      <path d={`M1249 421L1261 530${spline(filletInner, "L")}L1606 443L1542 440L1400 470Z`} fill="url(#boss)" />
      <path d={spline(filletInner.slice(14))} fill="none" stroke="#5a5a5a" strokeWidth=".8" />
      <path d={spline(filletInner.slice(2, 16))} fill="none" stroke="#848484" strokeWidth=".8" />

      {/* slot floor */}
      <path d={`M1530 417L1601 423${spline(slotEdge, "L")}L1548 483L1542 448Z`} fill={face} stroke="#555" strokeWidth=".8" />
      <path d="M1308 396L1378 402Q1350 413 1335 433L1322 427L1282 423Q1292 407 1308 396Z" fill={face} stroke="#555" strokeWidth=".7" />

      {/* bore */}
      <path
        d={`${spline(crownInnerBack)}L1530 417Q1550 440 1546 470L1542 448L1470 442${spline(boreFront, "L")}L1335 433Q1350 413 1378 402Z`}
        fill="url(#bore)"
      />

      {/* front crown */}
      <path d={`M1249 421${spline(boreFrontBack, "L")}L1542 449${spline(frontRim, "L")}Z`} fill={face} stroke="#555" strokeWidth=".7" />

      {/* rear crown */}
      <path d="M1296 307L1368 313L1378 402L1308 396Z" fill={dark} />
      <path d="M1517 327L1589 334L1601 423L1530 417Z" fill={dark} />
      <path d="M1517 327L1530 417" stroke="#8a8a8a" strokeWidth=".9" />
      <path d={`${spline(crownOuter)}${spline(crownInner, "L")}Z`} fill={face} stroke="#4c4c50" strokeWidth=".7" />
    </g>
  );
}

function ScaleBar() {
  return (
    <g className="font-['Open_Sans',sans-serif] text-[11px]" textAnchor="middle">
      <path d="M953.500 933.500h471v14h-471z" fill="#fff" fillOpacity="0" stroke="#000" />
      <path d="M953 933h118v15H953zM1188 933h119v15h-119z" />
      <text x="953" y="929">0.00</text>
      <text x="1188" y="929">20.00</text>
      <text x="1411" y="929" textAnchor="start">40.00 (m)</text>
      <text x="1070" y="968">10.00</text>
      <text x="1307" y="968">30.00</text>
    </g>
  );
}

function AxisTriad() {
  return (
    <g className="font-['Open_Sans',sans-serif] text-[12px]" textAnchor="middle">
      <path d="M1814 891L1830 852" stroke="#177a1c" strokeWidth="4" />
      <path d="M1835 839L1822 848Q1828 857 1838 856Z" fill="#0c5a12" />
      <path d="M1835 839L1829 852L1838 855Z" fill="#1c8a22" />
      <path d="M1813 893L1873 899" stroke="#b01418" strokeWidth="4" />
      <path d="M1893 900L1872 891Q1870 899 1872 907Z" fill="#d0181c" />
      <path d="M1813 893L1806 848" stroke="#101088" strokeWidth="4" />
      <path d="M1804 830L1798 847Q1806 852 1814 847Z" fill="#1414c0" />
      <circle cx="1813" cy="892" r="3" fill="#104050" />
      <circle cx="1856" cy="842" r="8" fill="url(#ball)" />
      <text x="1805" y="820" fill="#2020a0">Z</text>
      <text x="1841" y="831" fill="#209040">Y</text>
      <text x="1908" y="902" fill="#c02050">X</text>
    </g>
  );
}

function Viewport() {
  return (
    <div className="min-h-0 grow bg-linear-to-b from-[#6b8bde] to-white">
      <svg viewBox="459 164 1461 830" className="h-full w-full" role="img" aria-label="Model geometry">
        <defs>
          <radialGradient id="ball" cx=".4" cy=".35">
            <stop offset="0" stopColor="#5ae8e4" />
            <stop offset="1" stopColor="#129a9c" />
          </radialGradient>
        </defs>
        <Model />
        <ScaleBar />
        <AxisTriad />
        <g fill="#fff" textAnchor="end" className="font-['Inter',sans-serif]">
          <text x="1906" y="212" className="text-[29px] font-bold">ANSYS</text>
          <text x="1906" y="231" className="text-[17px]">2021 <tspan className="font-bold">R1</tspan></text>
        </g>
        <g className="drop-shadow-[1px_2px_0_#555]" fill="#e6e9ec">
          <text x="580" y="545" className="font-['Noto_Sans_CJK_SC',sans-serif] text-[80px] font-light">莫西网</text>
          <text x="820" y="545" className="font-['Liberation_Serif',serif] text-[67px]">www. 3dmox. com</text>
        </g>
      </svg>
    </div>
  );
}

function Graphics() {
  return (
    <main className="flex min-w-0 grow flex-col">
      <PanelHeader title="Graphics" />
      <Viewport />
      <div className="flex h-[25px] shrink-0 items-start bg-[#f0f0f0]">
        <button type="button" className="ml-px h-[22px] border-r border-b-2 border-[#777] px-[7px] pt-[3px]">Model View</button>
        <button type="button" className="h-[19px] rounded-br-sm border-t-2 border-r-2 border-b-2 border-[#777] px-[5px] leading-[15px]">Print Preview</button>
        <span className="grow border-t-2 border-[#777]" />
      </div>
    </main>
  );
}

function StatusBar() {
  const cell = "flex h-full items-center border-l border-[#a0a0a0] pl-[2px]";
  return (
    <footer className="flex h-5 shrink-0 items-center border-t border-[#a0a0a0] bg-[#f0f0f0]">
      <span className="flex grow items-center gap-[12px] pl-[10px]">
        <svg width="16" height="16" viewBox="0 0 16 16" fill="none" aria-hidden="true">
          <circle cx="8" cy="8" r="7.500" fill="#1f8a45" />
          <path d="M4 8.500l3 3 5-6" stroke="#fff" strokeWidth="2" />
        </svg>
        Ready
      </span>
      <span className={`${cell} w-[441px]`}>No Selection</span>
      <span className={`${cell} w-[193px] gap-2`}><span>Meter</span><span>Degree</span></span>
      <span className={`${cell} w-[58px]`}>0</span>
      <span className={`${cell} w-[57px]`}>0</span>
      <svg width="18" height="18" stroke="#999" aria-hidden="true"><path d="M3 18L18 3M8 18L18 8M13 18l5-5" /></svg>
    </footer>
  );
}

export default function App() {
  return (
    <div className="flex h-screen flex-col overflow-hidden bg-[#f0f0f0] font-['Open_Sans','Noto_Sans',sans-serif] text-[11px] text-[#111]">
      <header className="flex h-[23px] shrink-0 items-center bg-[#4a4a4a] pl-[2px] text-white">
        <span className="flex h-[17px] w-4 items-center justify-center bg-[#1414a0] text-[8px] font-bold text-[#cfd6ff]">DM</span>
        <h1 className="grow pl-[5px]">G: Geometry - DesignModeler</h1>
        <button type="button" aria-label="Minimize" className="flex w-[46px] justify-center"><Minus size={13} strokeWidth={1.5} /></button>
        <button type="button" aria-label="Restore" className="flex w-[45px] justify-center">
          <svg width="11" height="11" fill="none" stroke="#fff"><path d="M.5 2.500h8v8h-8zM2.500 2V.5h8v8H9" /></svg>
        </button>
        <button type="button" aria-label="Close" className="flex w-[49px] justify-center"><X size={15} strokeWidth={1.5} /></button>
      </header>
      <Toolbars />
      <div className="flex min-h-0 grow gap-1">
        <Sidebar />
        <Graphics />
      </div>
      <StatusBar />
    </div>
  );
}
